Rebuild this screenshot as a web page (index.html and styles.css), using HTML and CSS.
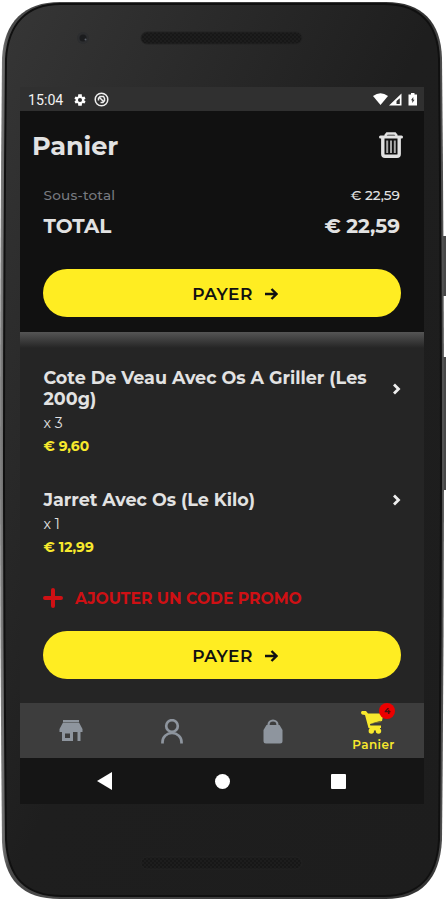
FILE: index.html
```html
<!DOCTYPE html>
<html lang="fr">
<head>
<meta charset="utf-8">
<title>Panier</title>
<link rel="stylesheet" href="styles.css">
</head>
<body>
<main class="phone">
  <svg class="shell" width="446" height="900" viewBox="0 0 446 900" aria-hidden="true">
    <defs>
      <linearGradient id="body" x1="0" y1="0" x2="1" y2="1">
        <stop offset="0" stop-color="#363636"/><stop offset=".25" stop-color="#2a2a2a"/><stop offset=".5" stop-color="#1e1e1e"/><stop offset="1" stop-color="#1d1d1d"/>
      </linearGradient>
      <linearGradient id="edge" x1="0" y1="0" x2="1" y2="0">
        <stop offset="0" stop-color="#858585"/><stop offset=".02" stop-color="#4a4a4a"/><stop offset=".97" stop-color="#333"/><stop offset="1" stop-color="#555"/>
      </linearGradient>
      <pattern id="mesh" width="4" height="4" patternUnits="userSpaceOnUse"><rect width="4" height="4" fill="#171717"/><path d="M0 1h2M2 3h2" stroke="#232323"/></pattern>
    </defs>
    <path d="M440 236h6v60h-6zM440 357h6v133h-6z" fill="#484848"/>
    <path d="M60 2H386C422 2 441 22 442 58Q446 450 442 840C440 880 420 899 386 899H60C22 899 4 880 2 842Q-2 450 2 58C4 22 24 2 60 2Z" fill="url(#edge)"/>
    <path d="M60 4H384C420 4 438 24 439 59Q443 450 439 840C437 877 418 896 384 896H62C25 896 8 877 6 840Q2 450 6 59C8 24 27 4 60 4Z" fill="url(#body)" stroke="#101010" stroke-width="2"/>
    <circle cx="83" cy="38" r="6" fill="#2c2d2f"/><circle cx="83" cy="38" r="3.5" fill="#1b1c1e"/><circle cx="85.5" cy="39.5" r="1" fill="#5b6069"/>
    <rect x="141" y="32" width="161" height="12" rx="6" fill="url(#mesh)" stroke="#222"/>
    <rect x="141" y="857" width="161" height="12" rx="6" fill="url(#mesh)" stroke="#222"/>
  </svg>
  <section class="screen">
    <div class="status">
      <span class="clock">15:04</span>
      <svg class="gear" width="14" height="14" viewBox="0 0 24 24"><path fill="#fff" fill-rule="evenodd" d="M19.4 13a8 8 0 0 0 0-2l2.1-1.7-2-3.5-2.500 1a8 8 0 0 0-1.700-1L15 2H9l-.4 3.800a8 8 0 0 0-1.700 1l-2.500-1-2 3.500L4.600 11a8 8 0 0 0 0 2l-2.100 1.700 2 3.500 2.500-1a8 8 0 0 0 1.700 1L9 22h6l.4-3.800a8 8 0 0 0 1.700-1l2.500 1 2-3.500zM12 15.500a3.500 3.500 0 1 1 0-7 3.500 3.500 0 0 1 0 7z"/></svg>
      <svg class="sync" width="15" height="15" viewBox="0 0 15 15" fill="none" stroke="#eee"><circle cx="7.500" cy="7.500" r="6.300" stroke-width="1.500"/><path d="M4.500 8.500V6.300L6 4.500h3.500l1 2v2.200L9 10.500H6.500M5.500 5.500l4.500 4.500" stroke-width="1.500"/></svg>
      <span class="spacer"></span>
      <svg width="46" height="15" viewBox="0 0 46 15"><path fill="#fff" d="M0 4Q7.500-1.500 15 4L7.500 13z"/><path fill="#fff" fill-rule="evenodd" d="M16 13.500L28.500 1.500v12zM23.500 12h3.300V6.200L23.500 9z"/><path fill="#fff" fill-rule="evenodd" d="M35.500 2.500H38V1h3.500v1.500H44v11h-8.500zM40.300 5L38 8.300h1.300V11l2.200-3.300h-1.200z"/></svg>
    </div>
    <header class="summary">
      <div class="heading"><h1>Panier</h1>
        <svg width="26" height="27" viewBox="0 0 26 27" fill="none" stroke="#e2e2e2"><path d="M2.500 5h21" stroke-width="3" stroke-linecap="round"/><path d="M7 4l2-2.500h8L19 4" stroke-width="2.500"/><path d="M4.800 6v16q0 2.200 2.200 2.200h12q2.200 0 2.200-2.200V6" stroke-width="3.400"/><path d="M9.200 8.500v12.500M13 8.500v12.500M16.800 8.500v12.500" stroke="#a8a8a8" stroke-width="2"/></svg>
      </div>
      <div class="row sub"><span class="label">Sous-total</span><span class="value">€ 22,59</span></div>
      <div class="row total"><span class="label">TOTAL</span><span class="value">€ 22,59</span></div>
      <button class="pay"><span>PAYER</span><svg width="13" height="12" viewBox="0 0 13 12" fill="none" stroke="#111" stroke-width="2.400"><path d="M0 6h11.500M6.500 1l5 5-5 5"/></svg></button>
    </header>
    <section class="cart">
      <article class="item first">
        <div><h2>Cote De Veau Avec Os A Griller (Les<br>200g)</h2><p class="qty">x 3</p><p class="price">€ 9,60</p></div>
        <svg class="chev" width="9" height="12" viewBox="0 0 9 12" fill="none" stroke="#eee" stroke-width="2.800"><path d="M2 1.500L6.500 6 2 10.500"/></svg>
      </article>
      <article class="item second">
        <div><h2>Jarret Avec Os (Le Kilo)</h2><p class="qty">x 1</p><p class="price">€ 12,99</p></div>
        <svg class="chev" width="9" height="12" viewBox="0 0 9 12" fill="none" stroke="#eee" stroke-width="2.800"><path d="M2 1.500L6.500 6 2 10.500"/></svg>
      </article>
      <div class="promo"><svg width="20" height="20" viewBox="0 0 20 20" stroke="#cf1014" stroke-width="4" stroke-linecap="round"><path d="M10 2v16M2 10h16"/></svg><span>AJOUTER UN CODE PROMO</span></div>
      <button class="pay"><span>PAYER</span><svg width="13" height="12" viewBox="0 0 13 12" fill="none" stroke="#111" stroke-width="2.400"><path d="M0 6h11.500M6.500 1l5 5-5 5"/></svg></button>
    </section>
    <nav class="tabs">
      <div class="tab"><svg width="24" height="22" viewBox="0 0 24 22" fill="#8e959e"><path d="M4 0h16v2H4zM4 2.500h16L23.500 9v3H.5V9z"/><path fill-rule="evenodd" d="M3 11h11v10H3zM6 13.500h5v4.500H6zM18.500 11h3v10h-3z"/></svg></div>
      <div class="tab"><svg width="22" height="25" viewBox="0 0 22 25" fill="none" stroke="#8e959e" stroke-width="2.700"><circle cx="11" cy="7" r="5.800"/><path d="M1.500 24.500v-1.500a9.500 9 0 0 1 19 0v1.500"/></svg></div>
      <div class="tab"><svg width="20" height="25" viewBox="0 0 20 25"><path d="M5.500 9V6a4.500 4.500 0 0 1 9 0v3" fill="none" stroke="#8e959e" stroke-width="2.200"/><path fill="#8e959e" d="M3.500 6h13l3 5v11q0 2.500-2.500 2.500H3Q.5 24.500.5 22V11z"/></svg></div>
      <div class="tab active">
        <span class="cart-icon"><svg width="26" height="24" viewBox="0 0 26 24" fill="#f8e92d"><path d="M2 0h4l2 2.500h15.500L22 10l-12 3 .3 1.500H21V17H8.500L5 4 2 3.500Q0 1.500 2 0z"/><path d="M9.500 16h10.500v3.500H9.500z"/><circle cx="11.300" cy="20" r="2.700"/><circle cx="18.500" cy="20" r="2.700"/><path d="M11 12.500l9.500-2.700v1.700z" fill="#77712f"/></svg><b class="badge">4</b></span>
        <span class="tab-label">Panier</span>
      </div>
    </nav>
    <div class="system">
      <svg width="16" height="20" viewBox="0 0 16 20"><path d="M0 10L15 1v18z" fill="#fff"/></svg>
      <i class="home"></i><i class="recent"></i>
    </div>
  </section>
</main>
</body>
</html>
```
FILE: styles.css
```css
* { box-sizing: border-box; }
body { margin: 0; background: #fff; font-family: Montserrat, Inter, "Open Sans", sans-serif; color: #e2e2e2; }
h1, h2, p { margin: 0; }
svg { display: block; flex: none; }
.phone { position: relative; width: 446px; height: 900px; padding: 87px 22px 96px 20px; overflow: hidden; }
.shell { position: absolute; left: 0; top: 0; }
.screen { position: relative; width: 404px; height: 717px; background: #252525; display: flex; flex-direction: column; }
.status { height: 24px; background: #303030; display: flex; align-items: center; padding: 1px 5px 0 8px; }
.clock { font: 400 14.200px Roboto, sans-serif; color: #f2f2f2; width: 45px; }
.sync { margin-left: 7px; }
.spacer { flex: 1; }
.summary { height: 221px; background: #111; padding: 18px 24px 0 23px; }
.heading { display: flex; justify-content: space-between; align-items: center; height: 33px; margin: 0 -4px 0 -11px; }
h1 { font-size: 25.600px; line-height: 33px; font-weight: 700; letter-spacing: -.1px; }
.row { display: flex; justify-content: space-between; align-items: center; white-space: nowrap; padding-left: .5px; }
.sub { height: 20px; margin-top: 23px; font-size: 13.600px; font-weight: 500; }
.sub .label { color: #777a80; letter-spacing: .2px; }
.total { height: 28px; margin-top: 7px; font-size: 20px; font-weight: 700; }
.pay { width: 358px; height: 48px; border: 0; border-radius: 24px; background: #ffed22; color: #111; display: flex; align-items: center; justify-content: center; gap: 12px; font: 600 17px Montserrat, Inter, sans-serif; padding: 2px 0 0 26px; letter-spacing: .5px; }
.summary .pay { margin-top: 29px; }
.cart { height: 371px; padding: 35px 23px 0; background: linear-gradient(#555 0, #3d3d3d 8px, #252525 16px); }
.item { display: flex; justify-content: space-between; }
.item > div { padding-left: .5px; }
.first { height: 122px; }
.second { height: 98px; }
h2 { font-size: 17.550px; line-height: 21px; font-weight: 700; white-space: nowrap; }
.qty { font-size: 14px; line-height: 18px; margin-top: 5px; }
.price { color: #f8e92d; font-size: 13.900px; line-height: 18px; font-weight: 700; margin-top: 5px; }
.first .chev { margin-top: 16px; }
.second .chev { margin-top: 5px; }
.promo { display: flex; align-items: center; height: 22px; gap: 12px; color: #cf1014; font-size: 15.600px; font-weight: 700; white-space: nowrap; }
.cart .pay { margin-top: 22px; }
.tabs { height: 55px; background: #3d3d3d; display: grid; grid-template-columns: repeat(4, 101px); }
.tab { display: flex; align-items: center; justify-content: center; padding-top: 1px; }
.active { flex-direction: column; justify-content: flex-start; padding-top: 8px; color: #f8e92d; }
.cart-icon { position: relative; margin-right: 1px; }
.badge { position: absolute; left: 19px; top: -8px; width: 16px; height: 16px; border-radius: 8px; background: #ec0000; color: #451111; font-size: 9px; line-height: 16px; text-align: center; }
.tab-label { font-size: 12px; line-height: 16px; font-weight: 600; letter-spacing: .4px; margin-top: 2px; }
.system { height: 46px; background: #151515; display: flex; align-items: center; padding-left: 77px; }
.home { width: 15px; height: 15px; border-radius: 50%; background: #fff; margin-left: 102px; }
.recent { width: 15px; height: 15px; border-radius: 1px; background: #fff; margin-left: 101px; }
```
